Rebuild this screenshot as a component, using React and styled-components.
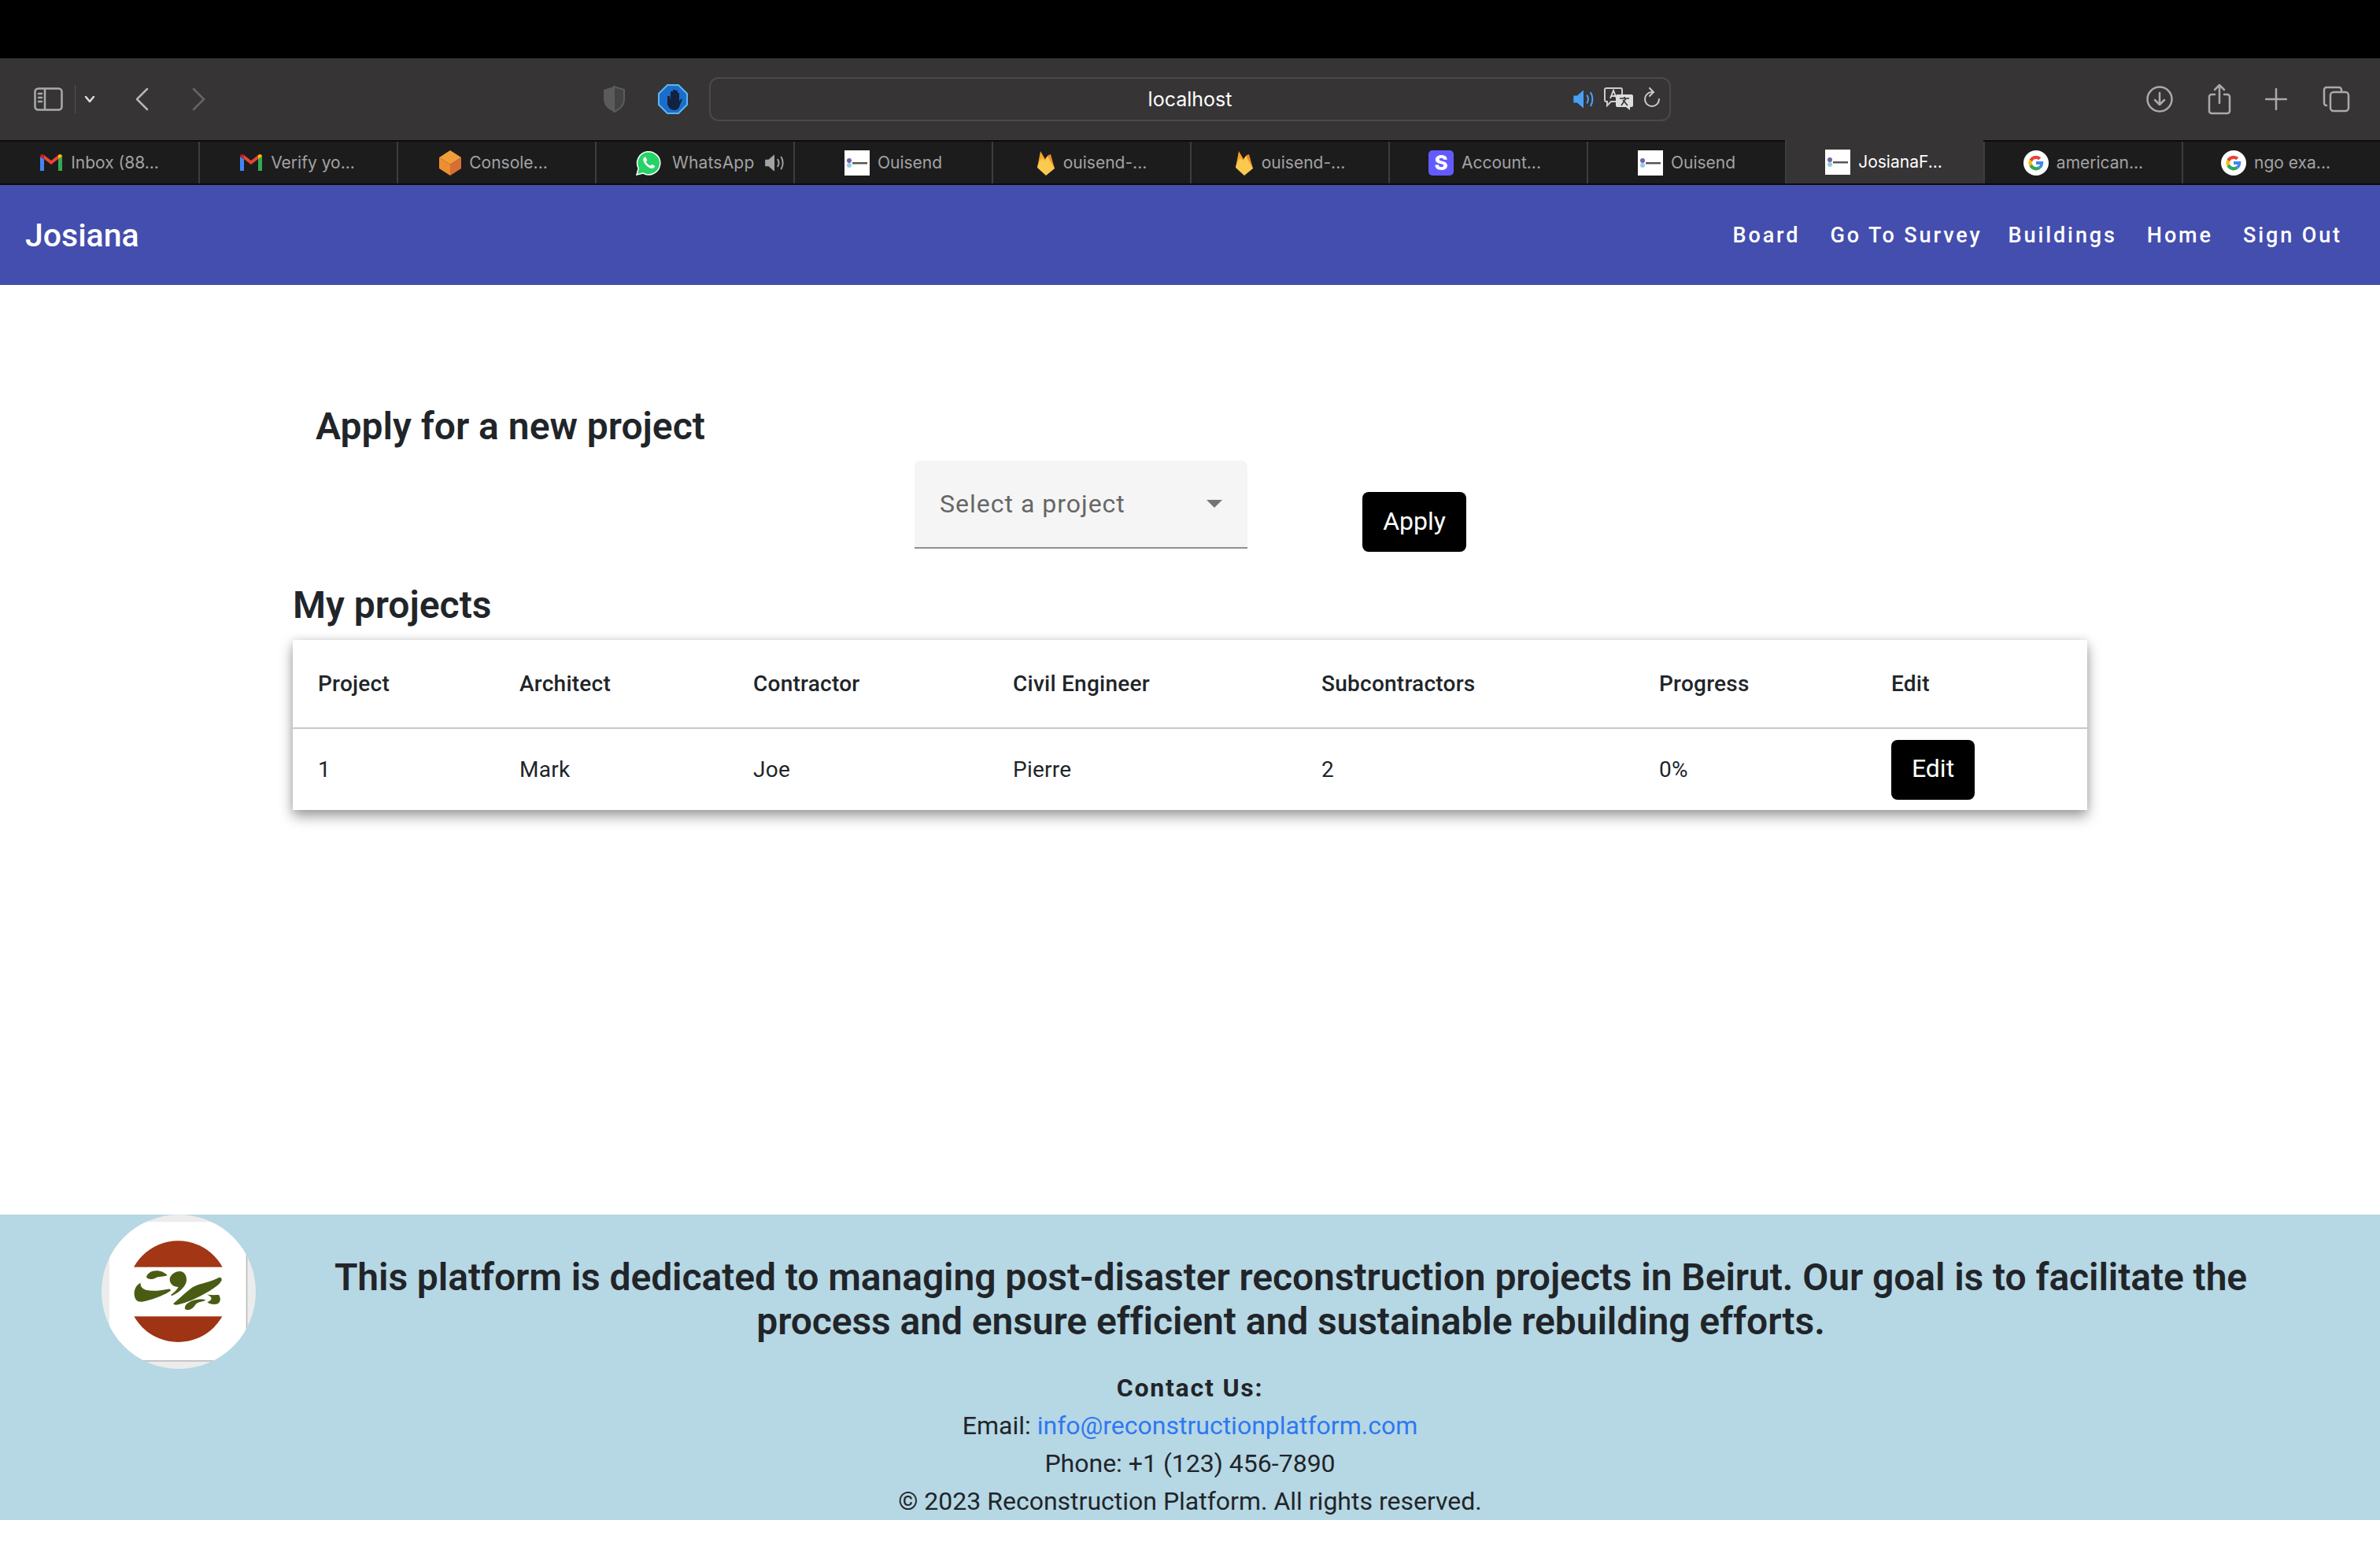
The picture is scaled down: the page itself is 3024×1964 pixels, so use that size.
import React from 'react'
import styled, { createGlobalStyle } from 'styled-components'

const Global = createGlobalStyle`
  html, body { margin: 0; padding: 0; background: #fff; }
  body { font-family: Roboto, "Liberation Sans", sans-serif; color: #212529; }
  * { box-sizing: border-box; }
`

const Page = styled.div`
  width: 3024px;
  height: 1964px;
  display: flex;
  flex-direction: column;
  overflow: hidden;
`
const TopBlack = styled.div`
  height: 74px;
  background: #000;
`
const Toolbar = styled.div`
  height: 104px;
  background: #363435;
  display: flex;
  align-items: center;
`
const ToolLeft = styled.div`
  width: 901px;
  display: flex;
  align-items: center;
  padding-left: 43px;
`
const ToolIcon = styled.svg`
  display: block;
  flex: none;
  margin-left: ${p => p.$ml || 0}px;
`
const Divider = styled.span`
  width: 1px;
  height: 36px;
  background: #555;
  margin-left: 15px;
`
const Address = styled.div`
  width: 1222px;
  height: 56px;
  border: 2px solid #4b4a4b;
  border-radius: 12px;
  display: flex;
  align-items: center;
  justify-content: center;
  position: relative;
  font-family: Inter, sans-serif;
  font-size: 25px;
  color: #fff;
`
const AddressIcons = styled.div`
  position: absolute;
  right: 10px;
  top: 11px;
  display: flex;
  align-items: center;
  gap: 11px;
`
const ToolRight = styled.div`
  flex: 1;
  display: flex;
  align-items: center;
  padding-left: 604px;
`
const Tabs = styled.div`
  height: 57px;
  background: #1c1c1d;
  border-top: 2px solid #0c0c0c;
  border-bottom: 2px solid #0c0c0c;
  display: grid;
  grid-template-columns: repeat(12, 1fr);
`
const Tab = styled.div`
  display: flex;
  align-items: center;
  justify-content: ${p => p.$audio ? 'flex-start' : 'center'};
  gap: 10px;
  padding-right: ${p => p.$shift || 0}px;
  padding-left: ${p => p.$audio ? 50 : 0}px;
  border-left: ${p => p.$first ? 'none' : '2px solid #3d3d3e'};
  background: ${p => p.$active ? '#363435' : 'transparent'};
  color: ${p => p.$active ? '#fff' : '#a2a2a2'};
  font-family: Inter, sans-serif;
  font-size: 21px;
  margin-top: ${p => p.$active ? '-2px' : '0'};
  white-space: nowrap;
`
const AudioLabel = styled.span`
  margin: 0 2px 0 4px;
  letter-spacing: 0.2px;
`
const OuiTile = styled.span`
  width: 32px;
  height: 32px;
  background: #fff;
  flex: none;
  display: flex;
  align-items: center;
  justify-content: center;
`
const StripeTile = styled.span`
  width: 32px;
  height: 32px;
  border-radius: 5px;
  background: #635bff;
  color: #fff;
  flex: none;
  font: 800 26px/32px Inter, sans-serif;
  text-align: center;
`
const Nav = styled.nav`
  height: 127px;
  background: #444eae;
  display: flex;
  align-items: center;
  justify-content: space-between;
  padding: 0 48px 0 32px;
  color: #fff;
`
const Brand = styled.div`
  font-size: 41px;
  font-weight: 500;
`
const NavLinks = styled.div`
  display: flex;
  gap: 38px;
`
const NavLink = styled.a`
  font-size: 27px;
  font-weight: 500;
  letter-spacing: 2.9px;
  color: #fff;
  margin-left: ${p => p.$tight ? '-5px' : '0'};
`
const Main = styled.main`
  flex: 1;
  padding: 150px 372px 0;
`
const ApplyTitle = styled.h3`
  margin: 0 0 0 29px;
  font-size: 48px;
  line-height: 60px;
  font-weight: 600;
`
const FormRow = styled.div`
  display: flex;
  align-items: flex-start;
  margin: 13px 0 0 790px;
  gap: 146px;
`
const Select = styled.div`
  width: 423px;
  height: 112px;
  background: #f5f5f5;
  border-bottom: 2px solid #8f8f8f;
  border-radius: 8px 8px 0 0;
  display: flex;
  align-items: center;
  justify-content: space-between;
  padding: 0 32px;
  color: #666;
  font-size: 32px;
  letter-spacing: 1px;
`
const Caret = styled.span`
  width: 0;
  height: 0;
  border-left: 10px solid transparent;
  border-right: 10px solid transparent;
  border-top: 10px solid #757575;
`
const BlackButton = styled.button`
  background: #000;
  color: #fff;
  border: none;
  border-radius: 8px;
  font-family: inherit;
  font-size: 32px;
  height: 76px;
  padding: 0 0 3px;
  width: ${p => p.$w}px;
  margin-top: ${p => p.$mt || 0}px;
`
const ProjectsTitle = styled.h3`
  margin: 38px 0 0;
  font-size: 48px;
  line-height: 60px;
  font-weight: 600;
`
const Card = styled.div`
  margin-top: 14px;
  background: #fff;
  box-shadow: 0 8px 16px rgba(0, 0, 0, 0.38), 0 0 10px rgba(0, 0, 0, 0.1);
`
const Row = styled.div`
  display: grid;
  grid-template-columns: 256px 297px 330px 392px 429px 295px 1fr;
  align-items: center;
  padding-left: 32px;
  height: ${p => p.$h}px;
  border-bottom: ${p => p.$line ? '2px solid #c8c8c8' : 'none'};
  font-size: 28px;
  font-weight: ${p => p.$head ? 500 : 400};
  letter-spacing: 0.25px;
`
const Footer = styled.footer`
  height: 388px;
  background: #b6d7e4;
  padding-left: 129px;
  text-align: center;
`
const FooterTop = styled.div`
  display: flex;
  align-items: flex-start;
`
const FooterText = styled.h4`
  flex: 1;
  margin: 52px 0 0;
  padding: 0 144px 0 75px;
  font-size: 48px;
  line-height: 56px;
  font-weight: 600;
  letter-spacing: -0.08px;
`
const FooterInfo = styled.div`
  margin: 0 0 0 -129px;
  font-size: 32px;
  line-height: 48px;
`
const ContactTitle = styled.strong`
  display: block;
  font-weight: 700;
  letter-spacing: 1.8px;
`
const MailLink = styled.a`
  color: #2f78f0;
`
const BottomGap = styled.div`
  height: 33px;
  background: #fff;
`

const Gmail = () => (
  <svg width="30" height="24" viewBox="0 0 30 24">
    <path d="M1 22V4l5 3v15z" fill="#4285f4" />
    <path d="M29 22V4l-5 3v15z" fill="#34a853" />
    <path d="M6 7V2l9 7 9-7v5l-9 7z" fill="#ea4335" />
    <path d="M1 4c0-3 3-4 5-2v5z" fill="#c5221f" />
    <path d="M29 4c0-3-3-4-5-2v5z" fill="#fbbc04" />
  </svg>
)
const Cube = () => (
  <svg width="28" height="32" viewBox="0 0 28 32">
    <path d="M14 0l14 9-14 9L0 9z" fill="#f19d38" />
    <path d="M0 9l14 9v14L0 23z" fill="#ec8f33" />
    <path d="M28 9L14 18v14l14-9z" fill="#d86f32" />
  </svg>
)
const WhatsApp = () => (
  <svg width="32" height="32" viewBox="0 0 32 32">
    <path d="M1 31l2.200-8A14.600 14.600 0 1 1 9 29z" fill="#25d366" stroke="#fff" strokeWidth="1.500" />
    <path d="M11 8.500c-1 .5-2 2-1.700 4 .6 4 5.500 9.500 10.500 10.500 2 .4 3.600-.8 4.200-2.200.2-.6 0-1-.4-1.200l-3-1.500c-.5-.2-.8 0-1.100.4l-1 1.200c-2.500-1-4.500-3-5.600-5.300l1-1.200c.3-.4.300-.8.100-1.200l-1.200-2.800c-.3-.7-1.200-1-1.800-.7z" fill="#fff" />
  </svg>
)
const Speaker = ({ color = '#a2a2a2', size = 28 }) => (
  <svg width={size} height={size} viewBox="0 0 26 26">
    <path d="M2 9h4l7-6v20l-7-6H2z" fill={color} />
    <path d="M17 9c1.500 2.500 1.500 5.500 0 8M21 6c2.500 4 2.500 10 0 14" stroke={color} strokeWidth="1.800" fill="none" strokeLinecap="round" />
  </svg>
)
const Oui = () => (
  <OuiTile>
    <svg width="28" height="22" viewBox="0 0 28 22">
      <circle cx="4" cy="8" r="3" fill="#7b5ea7" />
      <circle cx="4" cy="14" r="3" fill="#8fd0e0" />
      <rect x="8" y="10" width="19" height="2.500" fill="#555" />
    </svg>
  </OuiTile>
)
const Fire = () => (
  <svg width="24" height="32" viewBox="0 0 24 32">
    <path d="M1 22L5 1l7 12z" fill="#f5a623" />
    <path d="M1 22L15 6l3-1 5 18z" fill="#ee8b27" />
    <path d="M1 22c1-6 4-10 6-12l4 3 3-6 9 16-11 9z" fill="#fbc94f" />
  </svg>
)
const Google = () => (
  <svg width="32" height="32" viewBox="0 0 32 32">
    <circle cx="16" cy="16" r="16" fill="#fff" />
    <path d="M16 11a5 5 0 0 1 3.300 1.300l3-3A9.500 9.500 0 0 0 7.500 11.700l3.500 2.700A5.300 5.300 0 0 1 16 11z" fill="#ea4335" />
    <path d="M7.500 11.700a9.500 9.500 0 0 0 0 8.600l3.500-2.700a5.300 5.300 0 0 1 0-3.200z" fill="#fbbc05" />
    <path d="M7.500 20.300a9.500 9.500 0 0 0 14.600 2.800l-3.400-2.600A5.400 5.400 0 0 1 11 17.600z" fill="#34a853" />
    <path d="M25.300 14H16v4h5.300a4.600 4.600 0 0 1-2.600 2.500l3.400 2.600c2.200-2 3.400-5.200 3.200-9.100z" fill="#4285f4" />
  </svg>
)

const tabs = [
  { icon: <Gmail />, label: 'Inbox (88...' },
  { icon: <Gmail />, label: 'Verify yo...', shift: 3 },
  { icon: <Cube />, label: 'Console...', shift: 8 },
  { icon: <WhatsApp />, label: 'WhatsApp', audio: true },
  { icon: <Oui />, label: 'Ouisend' },
  { icon: <Fire />, label: 'ouisend-...' },
  { icon: <Fire />, label: 'ouisend-...' },
  { icon: <StripeTile>S</StripeTile>, label: 'Account...', shift: 9 },
  { icon: <Oui />, label: 'Ouisend' },
  { icon: <Oui />, label: 'JosianaF...', shift: 3, active: true },
  { icon: <Google />, label: 'american...' },
  { icon: <Google />, label: 'ngo exa...', shift: 15 },
]

const headers = ['Project', 'Architect', 'Contractor', 'Civil Engineer', 'Subcontractors', 'Progress', 'Edit']
const cells = ['1', 'Mark', 'Joe', 'Pierre', '2', '0%']

const stroke = { fill: 'none', stroke: '#aaa', strokeWidth: 2.500, strokeLinecap: 'round', strokeLinejoin: 'round' }

function Logo() {
  return (
    <svg width="196" height="196" viewBox="87 72 588 588">
      <defs>
        <clipPath id="logoCircle"><circle cx="381" cy="366" r="294" /></clipPath>
        <clipPath id="logoRed"><circle cx="379" cy="365" r="193" /></clipPath>
      </defs>
      <g clipPath="url(#logoCircle)">
        <rect x="87" y="72" width="588" height="588" fill="#ececec" />
        <rect x="117" y="100" width="523" height="528" fill="#fff" />
        <rect x="638" y="100" width="5" height="532" fill="#bdbdbd" />
        <rect x="117" y="627" width="526" height="5" fill="#bdbdbd" />
      </g>
      <g clipPath="url(#logoRed)">
        <rect x="180" y="160" width="400" height="112" fill="#a23615" />
        <rect x="180" y="460" width="400" height="110" fill="#9e3414" />
      </g>
      <g fill="#4a5c14">
        <path d="M258 310 C262 296 276 286 296 286 C314 286 330 294 338 304 C322 310 306 306 292 314 C280 320 262 320 258 310 Z" />
        <path d="M236 332 C220 340 210 356 212 378 C214 396 224 406 240 404 C270 400 330 378 350 362 C352 356 346 354 340 356 C310 362 282 364 260 360 C244 356 234 346 236 332 Z" />
        <path d="M385 288 C402 288 412 304 411 322 C410 346 384 368 356 381 C350 380 352 376 356 374 C368 366 376 356 380 348 C362 348 346 336 347 318 C348 302 368 288 385 288 Z" />
        <path d="M530 314 C538 308 546 312 545 322 C540 336 520 350 500 362 C460 386 410 410 372 416 C362 416 358 412 364 408 C390 388 420 356 440 346 C470 332 505 328 530 314 Z" />
        <path d="M490 376 C504 380 522 378 534 378 C542 390 542 404 530 412 C516 416 500 414 490 406 C500 402 506 396 506 390 C504 384 496 382 490 376 Z" />
        <path d="M405 424 C408 410 428 400 450 396 C464 394 476 394 484 398 C472 404 458 404 448 412 C440 422 434 432 420 435 C408 436 403 432 405 424 Z" />
      </g>
    </svg>
  )
}

function App() {
  return (
    <>
      <Global />
      <Page>
        <TopBlack />
        <Toolbar>
          <ToolLeft>
            <ToolIcon width="37" height="30" viewBox="0 0 37 30" {...stroke}>
              <rect x="1.500" y="1.500" width="34" height="27" rx="4" />
              <path d="M14 2v26M6 8h4M6 13h4M6 18h4" />
            </ToolIcon>
            <Divider />
            <ToolIcon $ml={11} width="14" height="10" viewBox="0 0 14 10" {...stroke} stroke="#ddd">
              <path d="M2 2l5 6 5-6" />
            </ToolIcon>
            <ToolIcon $ml={50} width="18" height="30" viewBox="0 0 18 30" {...stroke} stroke="#b5b5b5">
              <path d="M16 2L3 15l13 13" />
            </ToolIcon>
            <ToolIcon $ml={55} width="18" height="30" viewBox="0 0 18 30" {...stroke} stroke="#666">
              <path d="M2 2l13 13L2 28" />
            </ToolIcon>
            <ToolIcon $ml={504} width="28" height="34" viewBox="0 0 28 34">
              <path d="M14 1l13 4v12c0 8-6 13-13 16C7 30 1 25 1 17V5z" fill="#5c5b5c" />
              <path d="M14 1l13 4v12c0 8-6 13-13 16z" fill="#444344" stroke="#5c5b5c" strokeWidth="2" />
            </ToolIcon>
            <ToolIcon $ml={42} width="38" height="38" viewBox="0 0 38 38">
              <path d="M12 1h14l11 11v14L26 37H12L1 26V12z" fill="#1b6dc9" stroke="#58b7f5" strokeWidth="2" />
              <path d="M12 15v10c1 5 5 8 9 8 4 0 6-3 7-7l3-7c-2-1-3 1-4 3V11h-2v8-11h-3v11-12h-3v12-10h-3v11l-1-5z" fill="#12233f" />
            </ToolIcon>
          </ToolLeft>
          <Address>
            localhost
            <AddressIcons>
              <Speaker color="#4a9ff5" size={30} />
              <svg width="38" height="30" viewBox="0 0 38 30">
                <path d="M3 1h18a2 2 0 0 1 2 2v13a2 2 0 0 1-2 2H9l-5 5v-5H3a2 2 0 0 1-2-2V3a2 2 0 0 1 2-2z" fill="#363435" stroke="#ccc" strokeWidth="2" />
                <path d="M8 14l4-10 4 10M9.500 11h5" stroke="#ddd" strokeWidth="1.800" fill="none" />
                <path d="M17 9h18a2 2 0 0 1 2 2v12a2 2 0 0 1-2 2h-2v4l-5-4H17a2 2 0 0 1-2-2V11a2 2 0 0 1 2-2z" fill="#ddd" />
                <path d="M20 14h12M26 12v2M22 23l6-9M24 16l6 7" stroke="#363435" strokeWidth="1.600" fill="none" />
              </svg>
              <svg width="24" height="30" viewBox="0 0 24 30" fill="none" stroke="#ccc" strokeWidth="2" strokeLinecap="round">
                <path d="M12 6a9 9 0 1 0 9 9" />
                <path d="M9 1l5 5-5 5" />
              </svg>
            </AddressIcons>
          </Address>
          <ToolRight>
            <ToolIcon width="34" height="34" viewBox="0 0 34 34" {...stroke}>
              <circle cx="17" cy="17" r="15.500" />
              <path d="M17 9v15M11 18l6 6 6-6" />
            </ToolIcon>
            <ToolIcon $ml={43} width="32" height="40" viewBox="0 0 32 40" {...stroke}>
              <path d="M10 14H6a3 3 0 0 0-3 3v18a3 3 0 0 0 3 3h20a3 3 0 0 0 3-3V17a3 3 0 0 0-3-3h-4" />
              <path d="M16 25V2M10 8l6-6 6 6" />
            </ToolIcon>
            <ToolIcon $ml={42} width="28" height="28" viewBox="0 0 28 28" {...stroke}>
              <path d="M14 1v26M1 14h26" />
            </ToolIcon>
            <ToolIcon $ml={45} width="35" height="34" viewBox="0 0 35 34" {...stroke}>
              <path d="M5 25a3 3 0 0 1-3-3V5a3 3 0 0 1 3-3h16a3 3 0 0 1 3 3v2" />
              <rect x="10" y="8" width="23" height="24" rx="4" />
            </ToolIcon>
          </ToolRight>
        </Toolbar>
        <Tabs>
          {tabs.map((t, i) => (
            <Tab key={i} $first={i === 0} $active={t.active} $shift={t.shift} $audio={t.audio}>
              {t.icon}
              {t.audio ? <AudioLabel>{t.label}</AudioLabel> : t.label}
              {t.audio && <Speaker />}
            </Tab>
          ))}
        </Tabs>
        <Nav>
          <Brand>Josiana</Brand>
          <NavLinks>
            <NavLink>Board</NavLink>
            <NavLink>Go To Survey</NavLink>
            <NavLink $tight>Buildings</NavLink>
            <NavLink>Home</NavLink>
            <NavLink>Sign Out</NavLink>
          </NavLinks>
        </Nav>
        <Main>
          <ApplyTitle>Apply for a new project</ApplyTitle>
          <FormRow>
            <Select>Select a project<Caret /></Select>
            <BlackButton $w={132} $mt={40}>Apply</BlackButton>
          </FormRow>
          <ProjectsTitle>My projects</ProjectsTitle>
          <Card>
            <Row $h={113} $head $line>
              {headers.map(h => <div key={h}>{h}</div>)}
            </Row>
            <Row $h={103}>
              {cells.map((c, i) => <div key={i}>{c}</div>)}
              <div><BlackButton $w={106}>Edit</BlackButton></div>
            </Row>
          </Card>
        </Main>
        <Footer>
          <FooterTop>
            <Logo />
            <FooterText>
              This platform is dedicated to managing post-disaster reconstruction projects in Beirut. Our goal is to facilitate the process and ensure efficient and sustainable rebuilding efforts.
            </FooterText>
          </FooterTop>
          <FooterInfo>
            <ContactTitle>Contact Us:</ContactTitle>
            <div>Email: <MailLink>info@reconstructionplatform.com</MailLink></div>
            <div>Phone: +1 (123) 456-7890</div>
            <div>© 2023 Reconstruction Platform. All rights reserved.</div>
          </FooterInfo>
        </Footer>
        <BottomGap />
      </Page>
    </>
  )
}

export default App
